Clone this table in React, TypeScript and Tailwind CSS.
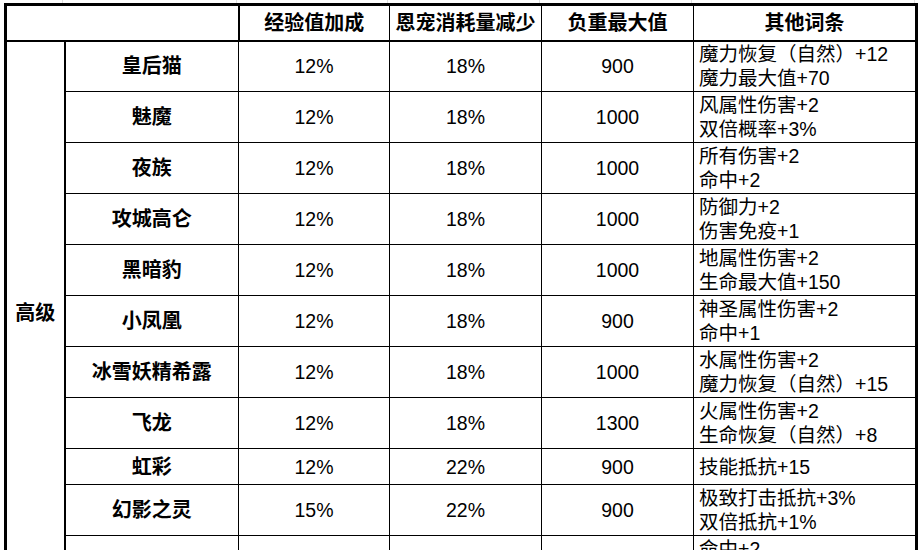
import React from "react";

type Pet = {
  name: string;
  exp: string;
  cost: string;
  load: string;
  extra: string[];
};

const pets: Pet[] = [
  { name: "皇后猫", exp: "12%", cost: "18%", load: "900", extra: ["魔力恢复（自然）+12", "魔力最大值+70"] },
  { name: "魅魔", exp: "12%", cost: "18%", load: "1000", extra: ["风属性伤害+2", "双倍概率+3%"] },
  { name: "夜族", exp: "12%", cost: "18%", load: "1000", extra: ["所有伤害+2", "命中+2"] },
  { name: "攻城高仑", exp: "12%", cost: "18%", load: "1000", extra: ["防御力+2", "伤害免疫+1"] },
  { name: "黑暗豹", exp: "12%", cost: "18%", load: "1000", extra: ["地属性伤害+2", "生命最大值+150"] },
  { name: "小凤凰", exp: "12%", cost: "18%", load: "900", extra: ["神圣属性伤害+2", "命中+1"] },
  { name: "冰雪妖精希露", exp: "12%", cost: "18%", load: "1000", extra: ["水属性伤害+2", "魔力恢复（自然）+15"] },
  { name: "飞龙", exp: "12%", cost: "18%", load: "1300", extra: ["火属性伤害+2", "生命恢复（自然）+8"] },
  { name: "虹彩", exp: "12%", cost: "22%", load: "900", extra: ["技能抵抗+15"] },
  { name: "幻影之灵", exp: "15%", cost: "22%", load: "900", extra: ["极致打击抵抗+3%", "双倍抵抗+1%"] },
  { name: "雷鸟", exp: "15%", cost: "22%", load: "1000", extra: ["命中+2", "雷属性伤害+2"] },
];

const cols = [59, 174, 151, 152, 152, 223];

export default function App() {
  return (
    <div
      className="h-[550px] w-[921px] overflow-hidden bg-white text-[19.5px] text-black"
      style={{ fontFamily: '"Liberation Sans", "Noto Sans CJK SC", sans-serif' }}
    >
      <div className="flex h-[3px] pl-[4px]">
        {cols.map((w, i) => (
          <div key={i} className="h-full border-r border-[#dedede]" style={{ width: w }} />
        ))}
      </div>
      <div className="pl-[4px]">
        <table className="table-fixed border-collapse border-[3px] border-black">
          <colgroup>
            {cols.map((w, i) => (
              <col key={i} style={{ width: w }} />
            ))}
          </colgroup>
          <thead>
            <tr className="h-[36px]">
              <th colSpan={2} className="border-r-2 border-b-2 border-black" />
              {["经验值加成", "恩宠消耗量减少", "负重最大值", "其他词条"].map((h) => (
                <th
                  key={h}
                  className="border border-b-2 border-black p-0 text-center text-[20px] font-bold leading-[24px]"
                >
                  {h}
                </th>
              ))}
            </tr>
          </thead>
          <tbody>
            {pets.map((p, i) => (
              <tr key={p.name} className={p.extra.length > 1 ? "h-[51px]" : "h-[36px]"}>
                {i === 0 && (
                  <td
                    rowSpan={pets.length}
                    className="border-r-2 border-black p-0 text-center align-middle text-[20px] font-bold leading-[24px]"
                  >
                    高级
                  </td>
                )}
                <td className="border border-black p-0 text-center text-[20px] font-bold leading-[24px]">
                  {p.name}
                </td>
                <td className="border border-black p-0 text-center leading-[24px]">{p.exp}</td>
                <td className="border border-black p-0 text-center leading-[24px]">{p.cost}</td>
                <td className="border border-black p-0 text-center leading-[24px]">{p.load}</td>
                <td className="border border-black py-0 pr-1 pl-[5px] text-left">
                  {p.extra.map((e) => (
                    <div key={e} className="h-[24px] whitespace-nowrap leading-[24px]">
                      {e}
                    </div>
                  ))}
                </td>
              </tr>
            ))}
          </tbody>
        </table>
      </div>
    </div>
  );
}
